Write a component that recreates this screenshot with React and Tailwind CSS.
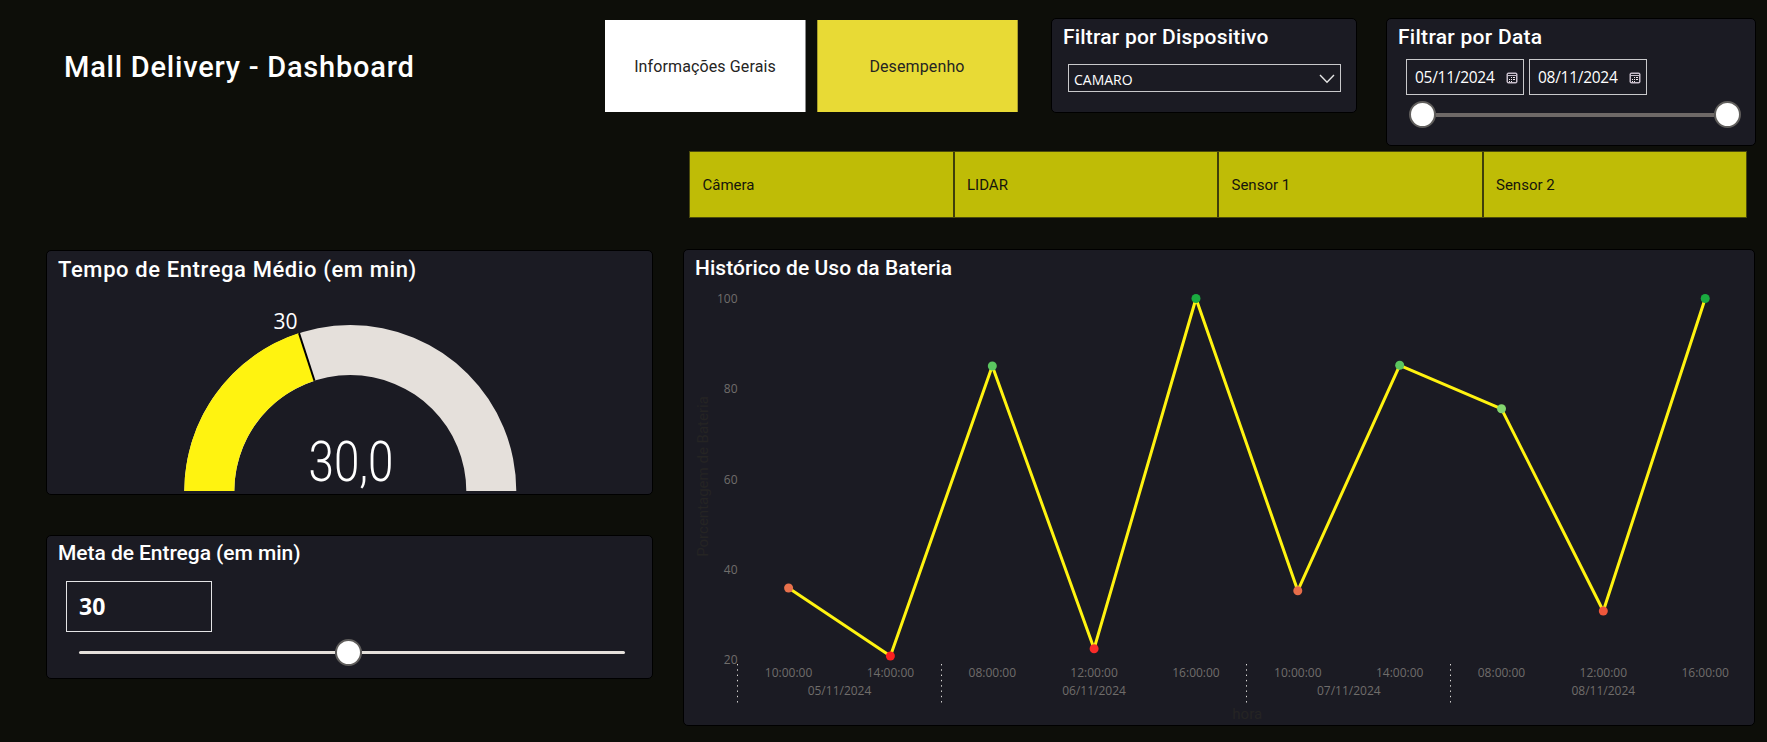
const SENSORS = ["Câmera", "LIDAR", "Sensor 1", "Sensor 2"];

const POINTS = [
  { x: 788.6, y: 588, time: "10:00:00", color: "#e8714c" },
  { x: 890.4, y: 656, time: "14:00:00", color: "#fa2020" },
  { x: 992.3, y: 366, time: "08:00:00", color: "#5bc660" },
  { x: 1094.1, y: 648.7, time: "12:00:00", color: "#f92c29" },
  { x: 1196, y: 298.5, time: "16:00:00", color: "#1aab40" },
  { x: 1297.8, y: 590.7, time: "10:00:00", color: "#e76d49" },
  { x: 1399.7, y: 365.3, time: "14:00:00", color: "#5bc660" },
  { x: 1501.5, y: 408.8, time: "08:00:00", color: "#84d66f" },
  { x: 1603.3, y: 611, time: "12:00:00", color: "#ef573b" },
  { x: 1705.2, y: 298.5, time: "16:00:00", color: "#1aab40" },
];

const DAYS = [
  { x: 839.5, label: "05/11/2024" },
  { x: 1094.1, label: "06/11/2024" },
  { x: 1348.8, label: "07/11/2024" },
  { x: 1603.3, label: "08/11/2024" },
];

const TICKS = [
  { y: 298.5, label: "100" },
  { y: 388.8, label: "80" },
  { y: 479, label: "60" },
  { y: 569.5, label: "40" },
  { y: 659.7, label: "20" },
];

const SEPARATORS = [737.5, 941.5, 1246.5, 1450.5];

function Panel({ className, children }) {
  return (
    <section className={`rounded-[5px] border border-black bg-[#1b1b23] ${className}`}>
      {children}
    </section>
  );
}

function CalendarIcon() {
  return (
    <svg width="12" height="12" viewBox="0 0 12 12" shapeRendering="crispEdges">
      <rect x="0.5" y="0.5" width="11" height="11" rx="2" fill="#c6bcc9" shapeRendering="auto" />
      <rect x="2" y="2" width="8" height="1" fill="#1b1b23" />
      <rect x="2" y="4" width="8" height="6" fill="#1b1b23" />
      <g fill="#f0e6ea">
        <rect x="5" y="5" width="1" height="1" />
        <rect x="7" y="5" width="2" height="1" />
        <rect x="3" y="7" width="1" height="1" />
        <rect x="5" y="7" width="1" height="1" />
        <rect x="7" y="7" width="2" height="1" />
        <rect x="3" y="9" width="1" height="1" />
        <rect x="5" y="9" width="1" height="1" />
      </g>
    </svg>
  );
}

function DateInput({ value }) {
  return (
    <div className="flex h-9 w-[118px] items-center justify-between border border-[#c9c9cb] pt-[1px] pr-[5px] pl-[8px] font-['Open_Sans',sans-serif] text-[15.5px] tracking-[-0.28px] text-white">
      <span>{value}</span>
      <CalendarIcon />
    </div>
  );
}

function Knob() {
  return (
    <div className="h-[27px] w-[27px] shrink-0 rounded-full border-2 border-[#605e5c] bg-white" />
  );
}

function Header() {
  return (
    <header className="flex h-[151px] items-start pt-[18px] pl-[64px]">
      <h1 className="mt-[27px] w-[541px] text-[29px] leading-[44px] font-medium tracking-[0.77px] text-white">
        Mall Delivery - Dashboard
      </h1>
      <button className="mt-[2px] h-[92px] w-[201px] border-r border-[#8a8a8a] bg-white pt-[1px] text-[16px] tracking-[0.12px] text-[#252423]">
        Informações Gerais
      </button>
      <button className="mt-[2px] ml-[11px] h-[92px] w-[201px] border-x border-[#a79e2a] bg-[#e8da35] pt-[1px] pr-[1px] text-[16px] tracking-[0.12px] text-[#252423]">
        Desempenho
      </button>
      <Panel className="ml-[33px] h-[95px] w-[306px] pl-[11px]">
        <h2 className="pt-[5px] text-[21px] leading-[26px] font-medium tracking-[0.2px] text-white">
          Filtrar por Dispositivo
        </h2>
        <div className="mt-[14px] ml-[5px] flex h-[28px] w-[273px] items-center justify-between border border-[#c9c9cb] pt-[2px] pr-[5px] pl-[5px] font-['Open_Sans',sans-serif] text-[14px] text-white">
          <span>CAMARO</span>
          <svg width="16" height="10" viewBox="0 0 16 10">
            <path d="M1 1 L8 8.2 L15 1" fill="none" stroke="#e6e6e6" strokeWidth="1.4" />
          </svg>
        </div>
      </Panel>
      <Panel className="ml-[29px] h-[128px] w-[370px] pl-[11px]">
        <h2 className="pt-[5px] text-[21px] leading-[26px] font-medium tracking-[0.28px] text-white">
          Filtrar por Data
        </h2>
        <div className="mt-[9px] ml-[8px] flex gap-[5px]">
          <DateInput value="05/11/2024" />
          <DateInput value="08/11/2024" />
        </div>
        <div className="mt-[6px] ml-[11px] flex w-[332px] items-center">
          <Knob />
          <div className="h-[4px] flex-1 bg-[#6e6967]" />
          <Knob />
        </div>
      </Panel>
    </header>
  );
}

function SensorTabs() {
  return (
    <nav className="ml-[689px] grid h-[67px] w-[1058px] grid-cols-4 gap-[2px] border border-[#4b4a0c] bg-[#3f3e0a]">
      {SENSORS.map((name) => (
        <div
          key={name}
          className="flex items-center bg-[#bfbc06] pt-[1px] pl-[12.5px] text-[15px] text-[#15150c]"
        >
          {name}
        </div>
      ))}
    </nav>
  );
}

function Gauge() {
  return (
    <Panel className="h-[245px] w-[607px]">
      <h2 className="pt-[5px] pl-[11px] text-[22px] leading-[27px] font-medium tracking-[0.6px] text-white">
        Tempo de Entrega Médio (em min)
      </h2>
      <svg width="604" height="209" viewBox="47 283 604 209" className="block overflow-visible">
        <path d="M184.3 491 A166 166 0 0 1 516.3 491 L466.3 491 A116 116 0 0 0 234.3 491 Z" fill="#e5e0db" />
        <path d="M184.3 491 A166 166 0 0 1 299 333.1 L314.5 380.7 A116 116 0 0 0 234.3 491 Z" fill="#fff310" />
        <path d="M299 333.1 L314.5 380.7" stroke="#000" strokeWidth="2" />
        <g fill="#fff">
          <text x="297.5" y="328.5" textAnchor="end" fontFamily="'Open Sans', sans-serif" fontSize="21">30</text>
          <text x="308.5" y="481" textLength="85" lengthAdjust="spacingAndGlyphs" fontFamily="Roboto, sans-serif" fontWeight="300" fontSize="56">30,0</text>
        </g>
      </svg>
    </Panel>
  );
}

function Goal() {
  return (
    <Panel className="mt-[40px] h-[144px] w-[607px]">
      <h2 className="pt-[4px] pl-[11px] text-[21px] leading-[27px] font-medium tracking-[-0.05px] text-white">
        Meta de Entrega (em min)
      </h2>
      <div className="mt-[14px] ml-[19px] flex h-[51px] w-[146px] items-center border border-[#e4e4e6] pl-[12px] font-['Open_Sans',sans-serif] text-[23px] font-bold text-white">
        30
      </div>
      <div className="mt-[7px] ml-[32px] flex w-[546px] items-center">
        <div className="h-[3px] w-[256px] rounded-l-full bg-[#e5e0db]" />
        <Knob />
        <div className="h-[3px] flex-1 rounded-r-full bg-[#e5e0db]" />
      </div>
    </Panel>
  );
}

function BatteryChart() {
  return (
    <Panel className="h-[477px] w-[1072px]">
      <h2 className="pt-[5px] pl-[11px] text-[21px] leading-[26px] font-medium tracking-[0.05px] text-white">
        Histórico de Uso da Bateria
      </h2>
      <svg width="1069" height="443" viewBox="684 281 1069 443" className="block">
        <g fontFamily="'Open Sans', sans-serif" fontSize="12" fill="#706d6b">
          {TICKS.map((t) => (
            <text key={t.label} x="737.5" y={t.y + 4.5} textAnchor="end">{t.label}</text>
          ))}
          {POINTS.map((p) => (
            <text key={p.x} x={p.x} y="677" textAnchor="middle">{p.time}</text>
          ))}
          {DAYS.map((d) => (
            <text key={d.x} x={d.x} y="695" textAnchor="middle">{d.label}</text>
          ))}
        </g>
        {SEPARATORS.map((x) => (
          <line key={x} x1={x} x2={x} y1="664" y2="703" stroke="#dcdad8" strokeDasharray="1.4 3.9" />
        ))}
        <g fontFamily="Roboto, sans-serif" fontSize="15" fill="#252423" textAnchor="middle">
          <text x="1247.2" y="718.5">hora</text>
          <text transform="translate(708 476.5) rotate(-90)">Porcentagem de Bateria</text>
        </g>
        <polyline
          points={POINTS.map((p) => `${p.x},${p.y}`).join(" ")}
          fill="none"
          stroke="#fff310"
          strokeWidth="3"
          strokeLinejoin="round"
        />
        {POINTS.map((p) => (
          <circle key={p.x} cx={p.x} cy={p.y} r="4.5" fill={p.color} />
        ))}
      </svg>
    </Panel>
  );
}

export default function App() {
  return (
    <main className="h-[742px] w-[1767px] overflow-hidden bg-[#0d0e09] font-[Roboto,sans-serif]">
      <Header />
      <SensorTabs />
      <div className="flex pt-[31px] pl-[46px]">
        <div className="pt-[1px]">
          <Gauge />
          <Goal />
        </div>
        <div className="ml-[30px]">
          <BatteryChart />
        </div>
      </div>
    </main>
  );
}
